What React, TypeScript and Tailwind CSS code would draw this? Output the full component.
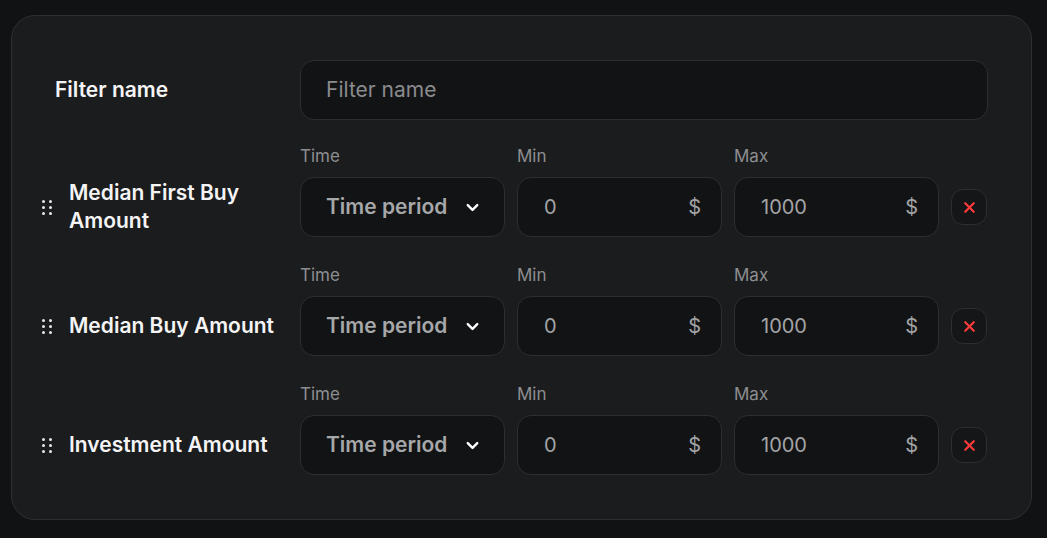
import React from "react";
import { ChevronDown, X } from "lucide-react";

const rows = ["Median First Buy Amount", "Median Buy Amount", "Investment Amount"];

const DragHandle = () => (
  <div className="grid grid-cols-2 gap-x-[4px] gap-y-[3px] w-[10px] shrink-0">
    {Array.from({ length: 6 }).map((_, i) => (
      <span key={i} className="w-[3px] h-[3px] rounded-full bg-[#e8e8e8]" />
    ))}
  </div>
);

const Field = ({ label, children }: { label: string; children: React.ReactNode }) => (
  <div className="flex-1 flex flex-col min-w-0">
    <span className="h-5 leading-5 mb-[11px] text-[17px] text-[#8d8e90]">{label}</span>
    {children}
  </div>
);

const boxCls =
  "h-[60px] rounded-[14px] border border-[#2d2e31] bg-[#121315] flex items-center";

const AmountInput = ({ value }: { value: string }) => (
  <div className={`${boxCls} pl-[26px] pr-[20px] justify-between text-[20px] text-[#a3a4a6]`}>
    <span>{value}</span>
    <span>$</span>
  </div>
);

const FilterRow = ({ name }: { name: string }) => (
  <div className="flex">
    <div className="w-[258px] shrink-0 self-end h-[60px] flex items-center gap-[17px] -ml-[13px]">
      <DragHandle />
      <span className="text-[21px] font-semibold leading-[28px] text-[#f4f4f5] w-[215px]">{name}</span>
    </div>
    <div className="flex-1 flex gap-3 items-end">
      <Field label="Time">
        <div className={`${boxCls} pl-[25px] pr-[22px] justify-between`}>
          <span className="text-[21px] font-semibold text-[#a6a7a9]">Time period</span>
          <ChevronDown size={19} strokeWidth={3} className="text-white" />
        </div>
      </Field>
      <Field label="Min">
        <AmountInput value="0" />
      </Field>
      <Field label="Max">
        <AmountInput value="1000" />
      </Field>
      <div className="w-[37px] h-[60px] flex items-center">
        <button className="w-[36px] h-[36px] rounded-[12px] border border-[#2d2e31] bg-[#151618] flex items-center justify-center">
          <X size={17} strokeWidth={3} className="text-[#ff3b3b]" />
        </button>
      </div>
    </div>
  </div>
);

export default function App() {
  return (
    <div
      className="w-[1047px] h-[538px] bg-[#111214] pt-[15px] pl-[11px]"
      style={{ fontFamily: "Inter, 'Noto Sans', sans-serif" }}
    >
      <div className="w-[1021px] h-[505px] rounded-[24px] border border-[#2e2f32] bg-[#1b1c1e] px-[43px] pt-[44px] flex flex-col gap-[28px]">
        <div className="flex items-center -mb-[2px]">
          <span className="w-[245px] shrink-0 text-[21px] font-semibold text-[#f4f4f5]">Filter name</span>
          <div className={`${boxCls} flex-1 px-[25px] text-[21px] text-[#8a8b8d]`}>Filter name</div>
        </div>
        {rows.map((r) => (
          <FilterRow key={r} name={r} />
        ))}
      </div>
    </div>
  );
}
